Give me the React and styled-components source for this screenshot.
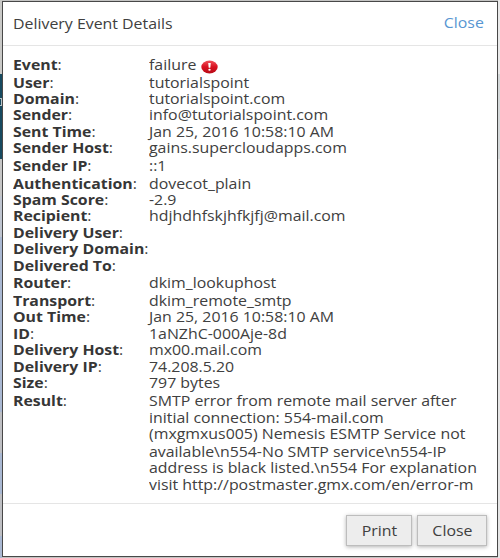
import React from "react";
import styled, { createGlobalStyle } from "styled-components";

const Global = createGlobalStyle`
  * { box-sizing: border-box; }
  body { margin: 0; font-family: "Open Sans", sans-serif; color: #404040; }
`;

const Page = styled.div`
  width: 500px;
  height: 558px;
  overflow: hidden;
  display: grid;
  grid-template-columns: 2px 496px 2px;
  background: #c4c4c3;
`;
const LeftStrip = styled.div`
  padding-top: 98px;
  background: linear-gradient(#c9c9c7 0 74px, #174a60 74px 159px, #c6c6c6 159px 196px, #bfc5d0 196px 237px, #a9b8d2 237px 412px, #bebfc3 412px 453px, #a9b8d2 453px 494px, #bebfc3 494px 536px, #a9b8d2 536px);
`;
const Fragment = styled.div`
  height: 8px;
  border-top: 1px solid #b9c4c8;
  border-right: 1px solid #b9c4c8;
  border-bottom: 1px solid #b9c4c8;
`;
const RightStrip = styled.div`
  background: linear-gradient(#eaeaea 0 74px, #d5d9da 74px 159px, #e6e6e6 159px);
`;
const Dialog = styled.section`
  margin-top: 1px;
  height: 556px;
  border: 1px solid #484848;
  background: #fff;
  display: flex;
  flex-direction: column;
`;
const Header = styled.header`
  height: 44px;
  padding: 0 13.5px 0 10.4px;
  border-bottom: 1px solid #e5e5e5;
  display: flex;
  justify-content: space-between;
  align-items: center;
`;
const Text = styled.span`
  display: inline-block;
  white-space: nowrap;
  transform: scaleX(${(p) => p.$stretch || 1.151});
  transform-origin: ${(p) => p.$origin || "left"} center;
`;
const Title = styled.h1`
  margin: 0;
  font-size: 13.8px;
  font-weight: 400;
`;
const CloseLink = styled.a`
  margin-bottom: 2px;
  color: #5796d2;
  font-size: 13.8px;
`;
const Details = styled.dl`
  margin: 0;
  padding: 11px 10px 0 10.4px;
  flex: 1;
`;
const Row = styled.div`
  display: grid;
  grid-template-columns: 135.8px 1fr;
  align-items: start;
  height: ${(p) => p.$height}px;
  font-size: 13.8px;
  line-height: 16px;
`;
const Term = styled.dt`
  height: 16px;
  white-space: nowrap;
`;
const Value = styled.dd`
  margin: 0;
`;
const Line = styled.div`
  display: flex;
  height: ${(p) => p.$height || 16}px;
`;
const Name = styled.b`
  font-weight: 700;
  color: #363636;
`;
const Alert = styled.svg`
  width: 17px;
  height: 14px;
  margin: 3px 0 0 10.4px;
`;
const Footer = styled.footer`
  height: 53px;
  border-top: 1px solid #e5e5e5;
  padding: 11px 10px 0 0;
  display: flex;
  justify-content: flex-end;
  gap: 5px;
`;
const Button = styled.button`
  width: ${(p) => p.$width}px;
  height: 31px;
  padding: 0;
  border: 1px solid #bdbdbd;
  background: #ededed;
  box-shadow: 0 1px 4px rgba(0, 0, 0, 0.3);
  font: 400 13.8px "Open Sans", sans-serif;
  color: #404040;
`;

const rows = [
  ["Event", 18, "failure"],
  ["User", 16, "tutorialspoint"],
  ["Domain", 16, "tutorialspoint.com"],
  ["Sender", 17, "info@tutorialspoint.com"],
  ["Sent Time", 16, "Jan 25, 2016 10:58:10 AM"],
  ["Sender Host", 18, "gains.supercloudapps.com"],
  ["Sender IP", 18, "::1"],
  ["Authentication", 16, "dovecot_plain"],
  ["Spam Score", 16, "-2.9"],
  ["Recipient", 17, "hdjhdhfskjhfkjfj@mail.com"],
  ["Delivery User", 16],
  ["Delivery Domain", 17],
  ["Delivered To", 17],
  ["Router", 18, "dkim_lookuphost"],
  ["Transport", 16, "dkim_remote_smtp"],
  ["Out Time", 17, "Jan 25, 2016 10:58:10 AM"],
  ["ID", 16, "1aNZhC-000Aje-8d"],
  ["Delivery Host", 17, "mx00.mail.com"],
  ["Delivery IP", 16, "74.208.5.20"],
  ["Size", 18, "797 bytes"],
];

const result = [
  [17, "SMTP error from remote mail server after"],
  [16, "initial connection: 554-mail.com"],
  [18, "(mxgmxus005) Nemesis ESMTP Service not"],
  [16, "available\\n554-No SMTP service\\n554-IP"],
  [17, "address is black listed.\\n554 For explanation"],
  [16, "visit http://postmaster.gmx.com/en/error-m"],
];

function AlertIcon() {
  return (
    <Alert viewBox="0 0 17 14">
      <defs>
        <linearGradient id="red" x1="0" y1="0" x2="0" y2="1">
          <stop offset="0" stopColor="#f0505a" />
          <stop offset="0.5" stopColor="#d8101f" />
          <stop offset="1" stopColor="#b80c18" />
        </linearGradient>
      </defs>
      <ellipse cx="8.5" cy="7" rx="8.2" ry="6.5" fill="url(#red)" />
      <path d="M7.2 3h2.6l-.5 4.8H7.7z" fill="#fff" />
      <ellipse cx="8.5" cy="9.8" rx="1.2" ry="1" fill="#fff" />
    </Alert>
  );
}

function Label({ children }) {
  return (
    <Term>
      <Text $stretch={1.148}><Name>{children}</Name>:</Text>
    </Term>
  );
}

export default function App() {
  return (
    <Page>
      <Global />
      <LeftStrip><Fragment /></LeftStrip>
      <Dialog>
        <Header>
          <Title><Text>Delivery Event Details</Text></Title>
          <CloseLink><Text $origin="right">Close</Text></CloseLink>
        </Header>
        <Details>
          {rows.map(([name, height, value]) => (
            <Row key={name} $height={height}>
              <Label>{name}</Label>
              <Value>
                <Line>
                  <Text>{value}</Text>
                  {name === "Event" && <AlertIcon />}
                </Line>
              </Value>
            </Row>
          ))}
          <Row $height={100}>
            <Label>Result</Label>
            <Value>
              {result.map(([height, line]) => (
                <Line key={line} $height={height}><Text>{line}</Text></Line>
              ))}
            </Value>
          </Row>
        </Details>
        <Footer>
          <Button $width={66}><Text $origin="center">Print</Text></Button>
          <Button $width={70}><Text $origin="center">Close</Text></Button>
        </Footer>
      </Dialog>
      <RightStrip />
    </Page>
  );
}
